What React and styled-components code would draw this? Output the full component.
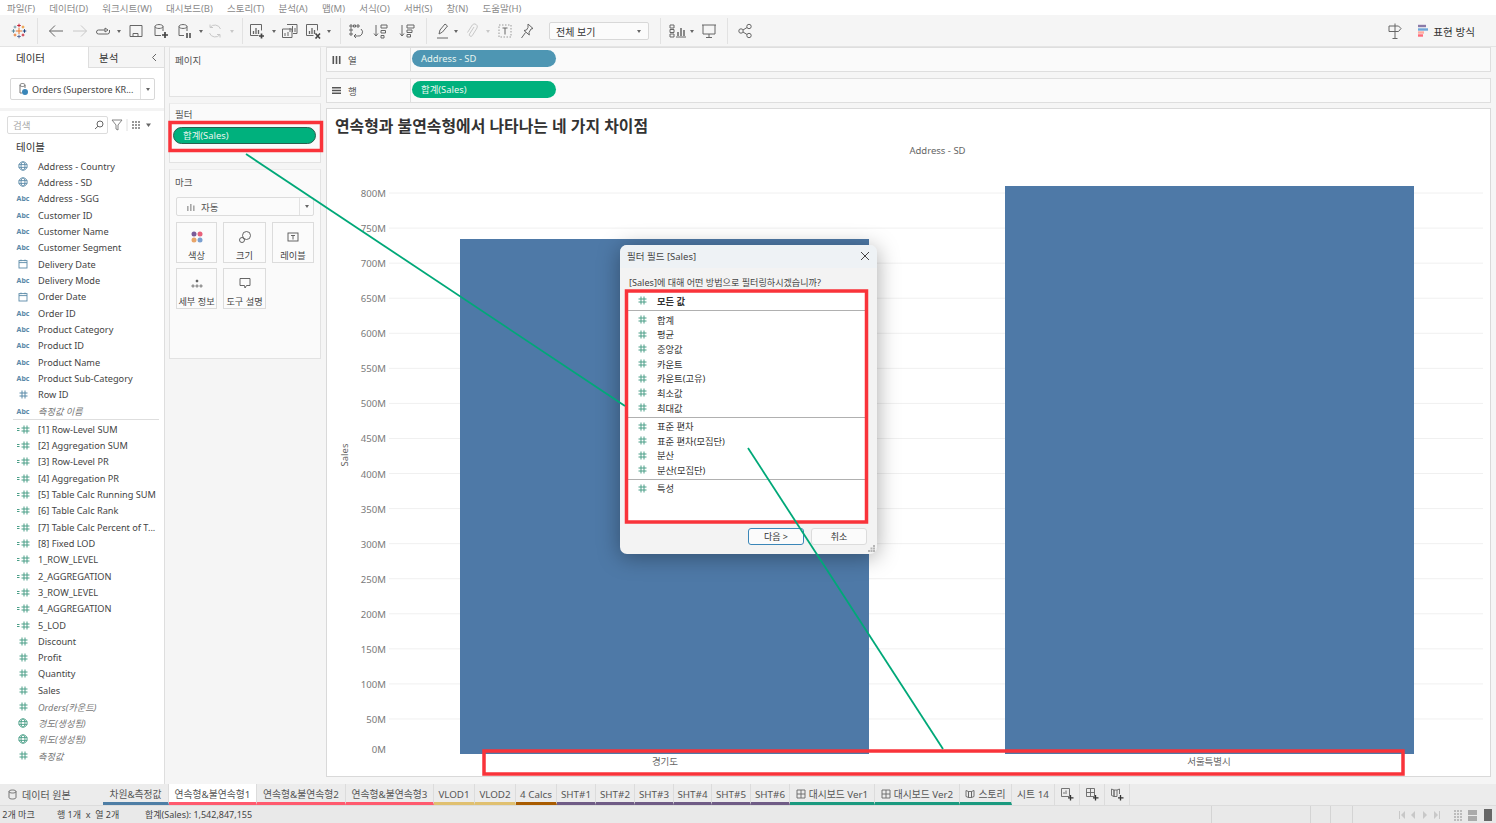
import React from 'react';
import styled, { createGlobalStyle } from 'styled-components';

const GlobalStyle = createGlobalStyle`
  html, body { margin: 0; padding: 0; background: #fff; }
  body { font-family: "Noto Sans", "Noto Sans CJK KR", sans-serif; font-size: 10px; color: #444; overflow: hidden; }
  * { box-sizing: border-box; }
`;

const Page = styled.div`
  position: relative;
  width: 1496px;
  height: 823px;
  display: grid;
  grid-template-rows: 15px 32px 737px 22px 17px;
  overflow: hidden;
`;

const MenuBar = styled.div`
  display: flex;
  align-items: center;
  gap: 14.2px;
  padding-left: 7px;
  background: #fff;
  color: #8a8a8a;
  font-size: 9.5px;
`;

const Toolbar = styled.div`
  display: flex;
  align-items: center;
  padding: 1px 21px 0 11px;
  background: #f5f5f5;
  border-bottom: 1px solid #e4e4e4;
`;

const Tool = styled.svg`
  flex: none;
  width: ${p => p.$w}px;
  height: 16px;
  margin-left: ${p => p.$ml}px;
  fill: none;
  stroke: ${p => p.$light ? '#c8c8c8' : '#666'};
  stroke-width: 1;
`;

const Caret = styled.span`
  flex: none;
  width: 0;
  height: 0;
  margin-left: ${p => p.$ml + 1}px;
  margin-right: 1px;
  border-left: 2px solid transparent;
  border-right: 2px solid transparent;
  border-top: 3px solid ${p => p.$light ? '#c8c8c8' : '#666'};
`;

const ToolSep = styled.span`
  flex: none;
  width: 1px;
  height: 26px;
  margin-left: ${p => p.$ml}px;
  background: #e2e2e2;
`;

const FitSelect = styled.div`
  flex: none;
  display: flex;
  align-items: center;
  justify-content: space-between;
  width: 100px;
  height: 18px;
  margin-left: 15px;
  padding: 0 7px 0 6px;
  background: #fbfbfb;
  border: 1px solid #d8d8d8;
  border-radius: 2px;
  color: #333;
  font-size: 10px;
`;

const Spacer = styled.div`
  flex: 1;
`;

const ShowLabel = styled.span`
  margin-left: 5px;
  color: #333;
  font-size: 10.6px;
`;

const Main = styled.div`
  display: grid;
  grid-template-columns: 165px 161px 1fr;
  min-height: 0;
  background: #f5f5f5;
`;

const LeftPanel = styled.aside`
  background: #fff;
  border-right: 1px solid #dedede;
  overflow: hidden;
`;

const PanelTabs = styled.div`
  display: flex;
  height: 21px;
`;

const PanelTab = styled.div`
  display: flex;
  align-items: center;
  justify-content: space-between;
  width: ${p => p.$w}px;
  padding: 0 7px 0 ${p => p.$pl}px;
  background: ${p => p.$active ? '#fff' : '#f5f5f5'};
  border-bottom: ${p => p.$active ? 'none' : '1px solid #dedede'};
  border-left: ${p => p.$active ? 'none' : '1px solid #dedede'};
  color: #333;
  font-size: 10.5px;
`;

const SourceBox = styled.div`
  display: flex;
  align-items: center;
  height: 22px;
  margin: 10px 9px 0 10px;
  background: #fff;
  border: 1px solid #d8d8d8;
  border-radius: 2px;
  color: #444;
  font-size: 9px;
`;

const SourceName = styled.span`
  flex: 1;
  margin-left: 1px;
  white-space: nowrap;
`;

const SourceCaret = styled.div`
  display: flex;
  align-items: center;
  justify-content: center;
  width: 14px;
  height: 100%;
  border-left: 1px solid #e2e2e2;
`;

const Band = styled.div`
  height: 3px;
  margin-top: 8px;
  background: #f3f3f3;
`;

const SearchRow = styled.div`
  display: flex;
  align-items: center;
  height: 18px;
  margin: 5px 0 0 7px;
`;

const SearchBox = styled.div`
  display: flex;
  align-items: center;
  justify-content: space-between;
  width: 101px;
  height: 18px;
  padding: 0 3px 0 5px;
  border: 1px solid #dcdcdc;
  border-radius: 2px;
  color: #aaa;
  font-size: 9.5px;
`;

const TableHead = styled.div`
  display: flex;
  align-items: center;
  height: 24px;
  padding: 1px 0 0 16px;
  color: #333;
  font-size: 10.5px;
`;

const FieldRow = styled.div`
  display: flex;
  align-items: center;
  gap: 6px;
  height: 16.33px;
  padding-left: 14px;
  color: ${p => p.$italic ? '#777' : '#444'};
  font-size: 9.2px;
  font-style: ${p => p.$italic ? 'italic' : 'normal'};
  white-space: nowrap;
`;

const FieldIconSlot = styled.span`
  display: flex;
  align-items: center;
  justify-content: center;
  flex: none;
  width: 18px;
`;

const AbcIcon = styled.span`
  color: #5b8aa8;
  font-size: 7px;
  font-weight: 700;
  font-style: normal;
`;

const FieldSep = styled.div`
  height: 1px;
  margin: 0 5px 0.66px 13px;
  background: #dedede;
`;

const ShelfColumn = styled.div`
  display: flex;
  flex-direction: column;
  padding: 0 5px 0 4px;
`;

const Card = styled.section`
  height: ${p => p.$h}px;
  margin-bottom: ${p => p.$mb}px;
  padding: 0 6px;
  background: #fafafa;
  border: 1px solid #e2e2e2;
  border-top-color: #ececec;
`;

const CardTitle = styled.div`
  display: flex;
  align-items: center;
  height: ${p => p.$h}px;
  margin-left: -1px;
  padding-bottom: ${p => p.$pb}px;
  color: #555;
  font-size: 9.5px;
`;

const Pill = styled.div`
  display: flex;
  align-items: center;
  width: ${p => p.$w}px;
  height: 17px;
  padding: 0 0 1px 9px;
  background: ${p => p.$color};
  border: ${p => p.$selected ? '1px solid #2a5f50' : 'none'};
  border-radius: 9px;
  color: #e8f5f0;
  font-size: 9.4px;
  white-space: nowrap;
`;

const FilterPill = styled(Pill)`
  margin-left: -3px;
`;

const MarkSelect = styled.div`
  display: flex;
  align-items: center;
  height: 19px;
  padding-left: 9px;
  background: #fbfbfb;
  border: 1px solid #dcdcdc;
  border-radius: 2px;
  color: #555;
  font-size: 9.5px;
`;

const MarkSelectLabel = styled.span`
  flex: 1;
  margin-left: 5px;
`;

const MarkGrid = styled.div`
  display: grid;
  grid-template-columns: 41px 43px 42px;
  grid-auto-rows: 41px;
  gap: 5px 6px;
  margin-top: 6px;
`;

const MarkButton = styled.div`
  display: flex;
  flex-direction: column;
  align-items: center;
  gap: 7px;
  padding-top: 8px;
  background: #fbfbfb;
  border: 1px solid #dcdcdc;
  color: #444;
  font-size: 9.2px;
  line-height: 12px;
  white-space: nowrap;
`;

const RightColumn = styled.div`
  display: flex;
  flex-direction: column;
  padding: 0 5px 7px 0;
`;

const Shelf = styled.div`
  display: flex;
  flex: none;
  height: ${p => p.$h}px;
  margin-bottom: ${p => p.$mb}px;
  background: #fafafa;
  border: 1px solid #dedede;
`;

const ShelfName = styled.div`
  display: flex;
  align-items: center;
  gap: 7px;
  width: 84px;
  padding-left: 5px;
  border-right: 1px solid #dedede;
  color: #555;
  font-size: 9.5px;
`;

const ShelfBody = styled.div`
  padding: 2px 0 0 1px;
`;

const Viz = styled.div`
  display: flex;
  flex: 1;
  flex-direction: column;
  min-height: 0;
  background: #fff;
  border: 1px solid #d9d9d9;
`;

const VizTitle = styled.h1`
  display: flex;
  align-items: center;
  flex: none;
  height: 33px;
  margin: 0 0 2px;
  padding-left: 8px;
  color: #333;
  font-size: 15.9px;
  font-weight: 700;
`;

const HeaderLabel = styled.div`
  flex: none;
  height: 14px;
  margin-left: 58px;
  color: #666;
  font-size: 9.5px;
  line-height: 14px;
  text-align: center;
`;

const ChartSvg = styled.svg`
  display: block;
  flex: none;
`;

const Tick = styled.text`
  fill: #7a7a7a;
  font-size: 9.6px;
  text-anchor: end;
`;

const AxisTitle = styled.text`
  fill: #666;
  font-size: 9.5px;
  text-anchor: middle;
`;

const CategoryLabel = styled.text`
  fill: #666;
  font-size: 9.5px;
  text-anchor: middle;
`;

const TabBar = styled.div`
  display: flex;
  background: #ececec;
  border-bottom: 1px solid #dcdcdc;
`;

const SourceTab = styled.div`
  display: flex;
  align-items: center;
  gap: 5px;
  width: 103px;
  padding-left: 8px;
  color: #555;
  font-size: 10px;
`;

const SheetTab = styled.div`
  display: flex;
  align-items: center;
  justify-content: center;
  gap: 3px;
  flex: none;
  width: ${p => p.$w}px;
  padding-top: ${p => p.$color ? 2 : 0}px;
  padding-bottom: ${p => p.$color ? 0 : 1}px;
  background: ${p => p.$active ? '#fff' : '#ececec'};
  border-right: 1px solid #dcdcdc;
  border-bottom: ${p => p.$color ? `3px solid ${p.$color}` : 'none'};
  color: #555;
  font-size: 9.8px;
  white-space: nowrap;
`;

const StatusBar = styled.div`
  display: flex;
  align-items: center;
  background: #e9e9e9;
  color: #444;
  font-size: 9px;
`;

const StatusText = styled.span`
  flex: none;
  width: ${p => p.$w}px;
  white-space: nowrap;
`;

const StatusCell = styled.div`
  flex: none;
  align-self: stretch;
  width: ${p => p.$w}px;
  border-left: 1px solid #d4d4d4;
`;

const StatusIcons = styled.div`
  display: flex;
  align-items: center;
  flex: none;
  align-self: stretch;
  width: 102px;
  padding-left: 45px;
  border-left: 1px solid #d4d4d4;
`;

const Dialog = styled.div`
  position: absolute;
  top: 245px;
  left: 620px;
  display: flex;
  flex-direction: column;
  width: 257px;
  height: 309px;
  background: #f3f3f3;
  border-radius: 7px;
  box-shadow: 0 3px 22px rgba(0, 0, 0, 0.35);
  overflow: hidden;
`;

const DialogTitle = styled.div`
  display: flex;
  align-items: center;
  justify-content: space-between;
  flex: none;
  height: 23px;
  padding: 0 7px 2px 7px;
  background: #eef2f5;
  color: #444;
  font-size: 9.5px;
`;

const DialogPrompt = styled.div`
  display: flex;
  align-items: flex-end;
  flex: none;
  height: 21px;
  padding-left: 9px;
  color: #444;
  font-size: 9.1px;
  white-space: nowrap;
`;

const OptionList = styled.div`
  flex: none;
  height: 230px;
  margin: 2px 11px 0 6px;
  background: #fff;
`;

const OptionGroup = styled.div`
  padding: ${p => p.$pt}px 0 2px;
  border-bottom: ${p => p.$last ? 'none' : '1px solid #b0b0b0'};
`;

const Option = styled.div`
  display: flex;
  align-items: center;
  gap: 10px;
  height: ${p => p.$rh}px;
  padding-left: 12px;
  color: #333;
  font-size: 9.3px;
  font-weight: ${p => p.$bold ? 700 : 400};
`;

const DialogButtons = styled.div`
  display: flex;
  justify-content: flex-end;
  gap: 7px;
  margin-top: 7px;
  padding-right: 10px;
`;

const DialogButton = styled.div`
  display: flex;
  align-items: center;
  justify-content: center;
  width: 56px;
  height: 17px;
  background: #fbfbfb;
  border: ${p => p.$primary ? '1.5px solid #3a86b8' : '1px solid #dcdcdc'};
  border-radius: 3px;
  color: #333;
  font-size: 9px;
`;

const Grip = styled.svg`
  position: absolute;
  right: 2px;
  bottom: 2px;
  width: 7px;
  height: 7px;
  fill: #b5b5b5;
`;

const Annotations = styled.svg`
  position: absolute;
  top: 0;
  left: 0;
  width: 1496px;
  height: 823px;
  pointer-events: none;
`;

const RedBox = styled.rect`
  fill: none;
  stroke: #f9333a;
  stroke-width: 3.5;
`;

const GreenLine = styled.line`
  stroke: #00a878;
  stroke-width: 1.8;
`;

const SmallCaret = styled.span`
  width: 0;
  height: 0;
  border-left: 2.5px solid transparent;
  border-right: 2.5px solid transparent;
  border-top: 3.5px solid #666;
`;

const MENUS = ['파일(F)', '데이터(D)', '워크시트(W)', '대시보드(B)', '스토리(T)', '분석(A)', '맵(M)', '서식(O)', '서버(S)', '창(N)', '도움말(H)'];

const DIMENSIONS = [
  ['globe', 'Address - Country'], ['globe', 'Address - SD'], ['abc', 'Address - SGG'], ['abc', 'Customer ID'],
  ['abc', 'Customer Name'], ['abc', 'Customer Segment'], ['date', 'Delivery Date'], ['abc', 'Delivery Mode'],
  ['date', 'Order Date'], ['abc', 'Order ID'], ['abc', 'Product Category'], ['abc', 'Product ID'],
  ['abc', 'Product Name'], ['abc', 'Product Sub-Category'], ['hashBlue', 'Row ID'], ['abc', '측정값 이름', true],
];

const MEASURES = [
  ['calc', '[1] Row-Level SUM'], ['calc', '[2] Aggregation SUM'], ['calc', '[3] Row-Level PR'], ['calc', '[4] Aggregation PR'],
  ['calc', '[5] Table Calc Running SUM'], ['calc', '[6] Table Calc Rank'], ['calc', '[7] Table Calc Percent of T...'], ['calc', '[8] Fixed LOD'],
  ['calc', '1_ROW_LEVEL'], ['calc', '2_AGGREGATION'], ['calc', '3_ROW_LEVEL'], ['calc', '4_AGGREGATION'], ['calc', '5_LOD'],
  ['hash', 'Discount'], ['hash', 'Profit'], ['hash', 'Quantity'], ['hash', 'Sales'],
  ['hash', 'Orders(카운트)', true], ['globeGreen', '경도(생성됨)', true], ['globeGreen', '위도(생성됨)', true], ['hash', '측정값', true],
];

const OPTION_GROUPS = [
  { pt: 2.5, rh: 14.7, items: ['모든 값'], bold: true },
  { pt: 1, rh: 14.7, items: ['합계', '평균', '중앙값', '카운트', '카운트(고유)', '최소값', '최대값'] },
  { pt: 1, rh: 14.5, items: ['표준 편차', '표준 편차(모집단)', '분산', '분산(모집단)'] },
  { pt: 1, rh: 14.5, items: ['특성'], last: true },
];

const PINK = '#ff5a6e';
const TAN = '#e0c070';
const PURPLE = '#6f5b85';
const TEAL = '#1a9a7f';

const SHEETS = [
  { name: '차원&측정값', w: 66, color: '#4e7ea5' },
  { name: '연속형&불연속형1', w: 88, color: PINK, active: true },
  { name: '연속형&불연속형2', w: 89, color: PINK },
  { name: '연속형&불연속형3', w: 88, color: PINK },
  { name: 'VLOD1', w: 41, color: TAN },
  { name: 'VLOD2', w: 41, color: TAN },
  { name: '4 Calcs', w: 41, color: '#a85b00' },
  { name: 'SHT#1', w: 39, color: PURPLE },
  { name: 'SHT#2', w: 39, color: PURPLE },
  { name: 'SHT#3', w: 39, color: PURPLE },
  { name: 'SHT#4', w: 38, color: PURPLE },
  { name: 'SHT#5', w: 39, color: PURPLE },
  { name: 'SHT#6', w: 39, color: PURPLE },
  { name: '대시보드 Ver1', w: 85, color: TEAL, icon: 'dash' },
  { name: '대시보드 Ver2', w: 85, color: TEAL, icon: 'dash' },
  { name: '스토리', w: 52, color: TEAL, icon: 'story' },
  { name: '시트 14', w: 43 },
];

const TICKS = Array.from({ length: 17 }, (_, i) => i * 50);

function HashIcon({ color = '#4a9e87' }) {
  return (
    <svg width="9" height="9" viewBox="0 0 9 9" fill="none" stroke={color} strokeWidth="1">
      <path d="M3 .5v8M6 .5v8M.5 3h8M.5 6h8" />
    </svg>
  );
}

function CalcIcon() {
  return (
    <svg width="13" height="9" viewBox="0 0 13 9" fill="none" stroke="#4a9e87" strokeWidth="1">
      <path d="M0 3.5h2.5M0 5.5h2.5M7 .5v8M10 .5v8M4.5 3h8M4.5 6h8" />
    </svg>
  );
}

function GlobeIcon({ color = '#5b8aa8' }) {
  return (
    <svg width="10" height="10" viewBox="0 0 10 10" fill="none" stroke={color} strokeWidth="0.9">
      <circle cx="5" cy="5" r="4.2" />
      <ellipse cx="5" cy="5" rx="2" ry="4.2" />
      <path d="M.8 3.6h8.4M.8 6.4h8.4" />
    </svg>
  );
}

function DateIcon() {
  return (
    <svg width="10" height="10" viewBox="0 0 10 10" fill="none" stroke="#5b8aa8" strokeWidth="0.9">
      <rect x="1" y="1.6" width="8" height="7.4" />
      <path d="M1 3.6h8M3 .6v1.6M7 .6v1.6" />
    </svg>
  );
}

function FieldIcon({ type }) {
  if (type === 'abc') return <AbcIcon>Abc</AbcIcon>;
  if (type === 'globe') return <GlobeIcon />;
  if (type === 'globeGreen') return <GlobeIcon color="#4a9e87" />;
  if (type === 'date') return <DateIcon />;
  if (type === 'hashBlue') return <HashIcon color="#5b8aa8" />;
  if (type === 'calc') return <CalcIcon />;
  return <HashIcon />;
}

function Field({ type, name, italic }) {
  return (
    <FieldRow $italic={italic}>
      <FieldIconSlot><FieldIcon type={type} /></FieldIconSlot>
      {name}
    </FieldRow>
  );
}

function TableauLogo() {
  const marks = [
    [8, 8, 3, '#e8762c'], [8, 2.5, 1.8, '#c72035'], [8, 13.5, 1.8, '#5b6f9e'],
    [2.5, 8, 1.8, '#59879b'], [13.5, 8, 1.8, '#1f447e'],
    [4, 4, 1.4, '#7099a6'], [12, 4, 1.4, '#eb912b'], [4, 12, 1.4, '#e8762c'], [12, 12, 1.4, '#c72035'],
  ];
  return (
    <Tool $w={16} $ml={0} viewBox="0 0 16 16">
      {marks.map(([x, y, r, c], i) => (
        <path key={i} d={`M${x - r} ${y}h${r * 2}M${x} ${y - r}v${r * 2}`} stroke={c} />
      ))}
    </Tool>
  );
}

const bars = 'M4.5 11V8M7 11V5M9.5 11V7';
const plus = 'M12.5 10.5v5M10 13h5';

function Toolset() {
  return (
    <>
      <TableauLogo />
      <ToolSep $ml={10} />
      <Tool $w={16} $ml={10} viewBox="0 0 16 16"><path d="M15 8H1.5M7 2.5L1.5 8 7 13.5" /></Tool>
      <Tool $w={16} $ml={8} $light viewBox="0 0 16 16"><path d="M1 8h13.5M9 2.5L14.5 8 9 13.5" /></Tool>
      <Tool $w={18} $ml={6} viewBox="0 0 18 16"><path d="M11 7H4.500a2 2 0 0 0 0 4h9a2 2 0 0 0 2-2V7M11 5V9L14 7z" /></Tool>
      <Caret $ml={4} />
      <Tool $w={14} $ml={7} viewBox="0 0 14 16"><path d="M1 2.500h12v11H1zM4 13.500v-3h5v3" /></Tool>
      <Tool $w={16} $ml={10} viewBox="0 0 16 16"><path d="M2 3.500c0-2.600 8-2.600 8 0s-8 2.600-8 0v9h6M10 3.500V8" /><path d="M12 9v6M9 12h6" strokeWidth="1.700" stroke="#444" /></Tool>
      <Tool $w={16} $ml={8} viewBox="0 0 16 16"><path d="M2 3.500c0-2.600 8-2.600 8 0s-8 2.600-8 0v9h5M10 3.500V8" /><path d="M10 10v5M13 10v5" strokeWidth="1.500" stroke="#444" /></Tool>
      <Caret $ml={5} />
      <Tool $w={16} $ml={3} $light viewBox="0 0 16 16"><path d="M13.500 6A6 6 0 0 0 3 4.500M2.500 10A6 6 0 0 0 13 11.500M3 1.500v3h3M13 14.500v-3h-3" /></Tool>
      <Caret $ml={6} $light />
      <ToolSep $ml={7} />
      <Tool $w={18} $ml={6} viewBox="0 0 18 16"><path d="M1.500 1.500v11h8M1.500 1.500h11v6" /><path d={bars} strokeWidth="1.300" /><path d={plus} strokeWidth="1.700" stroke="#444" /></Tool>
      <Caret $ml={4} />
      <Tool $w={18} $ml={4} viewBox="0 0 18 16"><path d="M6 1.500h10v9H12M1.500 6H11v8.500H1.500z" /><path d="M9 9V5M11.500 9V3M14 9V5M4 13v-3M7 13v-4" /></Tool>
      <Tool $w={18} $ml={6} viewBox="0 0 18 16"><path d="M1.500 1.500v11h7M1.500 1.500h11v6" /><path d={bars} strokeWidth="1.300" /><path d="M10.500 10.500l4.500 5M15 10.500l-4.500 5" strokeWidth="1.600" stroke="#444" /></Tool>
      <Caret $ml={3} />
      <ToolSep $ml={8} />
      <Tool $w={16} $ml={7} viewBox="0 0 16 16"><path d="M2 2h2v2H2zM5.500 2h2v2h-2zM9 2h2v2H9zM2 6h2v2H2zM2 10h2v2H2zM13 6a4 4 0 0 1-3.500 7H6M8 11l-2 2 2 2" /></Tool>
      <Tool $w={16} $ml={9} viewBox="0 0 16 16"><path d="M3 2v11M1 10.500L3 13l2-2.500M8 2h6v3H8zM8 7.500h4.500v2.500H8zM8 12.500h3V15H8z" /></Tool>
      <Tool $w={16} $ml={10} viewBox="0 0 16 16"><path d="M3 2v11M1 10.500L3 13l2-2.500M8 2h7v3H8zM8 7h5v2.500H8zM8 11.500h3.500V14H8z" /></Tool>
      <ToolSep $ml={11} />
      <Tool $w={14} $ml={9} viewBox="0 0 14 16"><path d="M3 11l1-4 5-6 2.500 2-5 6zM1 15h11" /></Tool>
      <Caret $ml={3} />
      <Tool $w={12} $ml={7} $light viewBox="0 0 12 16"><path d="M8 4l-4.500 7a1.600 1.600 0 0 0 2.700 1.700L11 5a2.800 2.800 0 0 0-4.700-3L1.500 9.500" /></Tool>
      <Caret $ml={7} $light />
      <Tool $w={14} $ml={7} viewBox="0 0 14 16"><path d="M1 2h12v12H1z" strokeDasharray="1.500 1.500" stroke="#999" /><path d="M4.500 5h5M7 5v6.500" /></Tool>
      <Tool $w={14} $ml={8} viewBox="0 0 14 16"><path d="M8 1l5 4.500-2 .5-2 3.500.3 2.500L4 7.500l2.500-.5L8 4.500zM5.500 9.500L1.500 15" /></Tool>
      <FitSelect>전체 보기<SmallCaret /></FitSelect>
      <ToolSep $ml={11} />
      <Tool $w={18} $ml={8} viewBox="0 0 18 16"><path d="M1 2h4v3H1zM1 6.500h4v3H1zM1 11h4v3H1zM7 14h10" /><path d="M9 13V9M12 13V5M15 13V7" strokeWidth="1.500" /></Tool>
      <Caret $ml={2} />
      <Tool $w={16} $ml={6} viewBox="0 0 16 16"><path d="M1 2h14M2 2v9h12V2M8 11v3.500M5 14.500h6" /></Tool>
      <ToolSep $ml={10} />
      <Tool $w={14} $ml={10} viewBox="0 0 14 16"><circle cx="3" cy="8" r="2.200" /><circle cx="11" cy="3.500" r="2.200" /><circle cx="11" cy="12.500" r="2.200" /><path d="M5 7l4-2.500M5 9l4 2.500" /></Tool>
      <Spacer />
      <Tool $w={14} $ml={0} viewBox="0 0 14 16"><path d="M7 .5v15M4.500 15.500h5M1 3h9.500L13 5.500 10.500 8.500H1z" /></Tool>
      <Tool $w={10} $ml={16} viewBox="0 0 10 16">
        <path d="M0 3h8" stroke="#8a7aa8" strokeWidth="2.400" />
        <path d="M0 6.500h10" stroke="#6ea6d8" strokeWidth="2.400" />
        <path d="M0 9.500h6" stroke="#ffaaa0" strokeWidth="2.400" />
        <path d="M0 12.500h5" stroke="#ff6b7a" strokeWidth="2.400" />
      </Tool>
      <ShowLabel>표현 방식</ShowLabel>
    </>
  );
}

function MarkCard() {
  return (
    <Card $h={190} $mb={0}>
      <CardTitle $h={27} $pb={4}>마크</CardTitle>
      <MarkSelect>
        <svg width="10" height="9" viewBox="0 0 10 9" fill="#a8a8a8"><path d="M1 4h1.600v5H1zM4 2h1.600v7H4zM7 3.500h1.600V9H7z" /></svg>
        <MarkSelectLabel>자동</MarkSelectLabel>
        <SourceCaret><SmallCaret /></SourceCaret>
      </MarkSelect>
      <MarkGrid>
        <MarkButton>
          <svg width="12" height="12" viewBox="0 0 12 12">
            <circle cx="3" cy="3" r="2.500" fill="#7a5c99" />
            <circle cx="9" cy="3" r="2.500" fill="#e8617a" />
            <circle cx="3" cy="9" r="2.500" fill="#e8a56a" />
            <circle cx="9" cy="9" r="2.500" fill="#7a9fd0" />
          </svg>
          색상
        </MarkButton>
        <MarkButton>
          <svg width="12" height="12" viewBox="0 0 12 12" fill="none" stroke="#555" strokeWidth="0.9">
            <circle cx="7.500" cy="4.500" r="4" />
            <circle cx="3" cy="9" r="2.500" />
          </svg>
          크기
        </MarkButton>
        <MarkButton>
          <svg width="12" height="12" viewBox="0 0 12 12" fill="none" stroke="#555" strokeWidth="0.9">
            <rect x="1" y="2" width="10" height="8" />
            <path d="M4 4.500h4M6 4.500v4" />
          </svg>
          레이블
        </MarkButton>
        <MarkButton>
          <svg width="12" height="12" viewBox="0 0 12 12" fill="none" stroke="#555" strokeWidth="0.8">
            <circle cx="6" cy="4" r="1" fill="#555" />
            <circle cx="2" cy="9" r="1.100" />
            <circle cx="6" cy="9" r="1.100" />
            <circle cx="10" cy="9" r="1.100" />
          </svg>
          세부 정보
        </MarkButton>
        <MarkButton>
          <svg width="12" height="12" viewBox="0 0 12 12" fill="none" stroke="#555" strokeWidth="0.9">
            <path d="M1 1.500h10v7H7.500L6 11 5.500 8.500H1z" />
          </svg>
          도구 설명
        </MarkButton>
      </MarkGrid>
    </Card>
  );
}

function Chart() {
  const y = v => 754 - v * 0.7012;
  return (
    <ChartSvg width="1163" height="618" viewBox="327 158 1163 618">
      {TICKS.map(v => (
        <g key={v}>
          {v > 0 && <line x1="389" x2="1483" y1={y(v)} y2={y(v)} stroke="#f0f0f0" />}
          <Tick x="386" y={v === 0 ? 753 : y(v) + 4}>{v}M</Tick>
        </g>
      ))}
      <AxisTitle transform="translate(348 455) rotate(-90)">Sales</AxisTitle>
      <rect x="460" y="239" width="409" height="515" fill="#4e79a7" />
      <rect x="1005" y="186" width="409" height="568" fill="#4e79a7" />
      <CategoryLabel x="665" y="765">경기도</CategoryLabel>
      <CategoryLabel x="1209" y="765">서울특별시</CategoryLabel>
    </ChartSvg>
  );
}

function FilterDialog() {
  return (
    <Dialog>
      <DialogTitle>
        필터 필드 [Sales]
        <svg width="10" height="10" viewBox="0 0 10 10" fill="none" stroke="#444" strokeWidth="1">
          <path d="M1 1l8 8M9 1l-8 8" />
        </svg>
      </DialogTitle>
      <DialogPrompt>[Sales]에 대해 어떤 방법으로 필터링하시겠습니까?</DialogPrompt>
      <OptionList>
        {OPTION_GROUPS.map(group => (
          <OptionGroup key={group.items[0]} $pt={group.pt} $last={group.last}>
            {group.items.map(item => (
              <Option key={item} $bold={group.bold} $rh={group.rh}>
                <HashIcon />
                {item}
              </Option>
            ))}
          </OptionGroup>
        ))}
      </OptionList>
      <DialogButtons>
        <DialogButton $primary>다음 &gt;</DialogButton>
        <DialogButton>취소</DialogButton>
      </DialogButtons>
      <Grip viewBox="0 0 7 7">
        <path d="M5 0h2v2H5zM2.500 2.500h2v2h-2zM5 2.500h2v2H5zM0 5h2v2H0zM2.500 5h2v2h-2zM5 5h2v2H5z" />
      </Grip>
    </Dialog>
  );
}

function TabIcon({ kind }) {
  if (kind === 'story') {
    return (
      <svg width="10" height="10" viewBox="0 0 10 10" fill="none" stroke="#666" strokeWidth="0.9">
        <path d="M1 1.500l2.500 1v6L1 7.500zM3.500 2.500h3v6h-3zM6.500 2.500L9 1.500v6l-2.500 1z" />
      </svg>
    );
  }
  return (
    <svg width="10" height="10" viewBox="0 0 10 10" fill="none" stroke="#666" strokeWidth="0.9">
      <path d="M1 1h8v8H1zM1 5h8M5 1v8" />
    </svg>
  );
}

function NewTabIcon({ kind }) {
  return (
    <svg width="14" height="14" viewBox="0 0 14 14" fill="none" stroke="#666" strokeWidth="0.9">
      {kind === 'sheet' && <path d="M1.500 1.500h8v8h-8zM4 7V5M6 7V3.500" />}
      {kind === 'dash' && <path d="M1.500 1.500h8v8h-8zM1.500 5.500h8M5.500 1.500v8" />}
      {kind === 'story' && <path d="M1.500 2l2.500 1v6.500l-2.500-1zM4 3h3v6.500H4zM7 3l2.500-1v5" />}
      <path d="M10.500 8v5.500M8 10.800h5.500" stroke="#333" strokeWidth="1.300" />
    </svg>
  );
}

function StatusNav() {
  return (
    <svg width="44" height="10" viewBox="0 0 44 10" fill="#c8c8c8">
      <path d="M1 1h1v8H1zM7 1v8L3 5zM17 1v8l-4-4zM25 1v8l4-4zM36 1v8l4-4zM41 1h1v8h-1z" />
    </svg>
  );
}

function StatusViews() {
  return (
    <svg width="38" height="14" viewBox="0 0 38 14" fill="#bcbcbc">
      <path d="M0 2h2v2H0zM3 2h2v2H3zM6 2h2v2H6zM0 5h2v2H0zM3 5h2v2H3zM6 5h2v2H6zM0 8h2v2H0zM3 8h2v2H3zM6 8h2v2H6zM0 11h2v2H0zM3 11h2v2H3zM6 11h2v2H6z" />
      <path d="M14 2h9v5h-9zM14 8h9v5h-9z" fill="#aaa" />
      <path d="M30 1h8v12h-8z" fill="#666" />
    </svg>
  );
}

export default function App() {
  return (
    <Page>
      <GlobalStyle />
      <MenuBar>
        {MENUS.map(m => <span key={m}>{m}</span>)}
      </MenuBar>
      <Toolbar>
        <Toolset />
      </Toolbar>
      <Main>
        <LeftPanel>
          <PanelTabs>
            <PanelTab $w={88} $pl={16} $active>데이터</PanelTab>
            <PanelTab $w={76} $pl={10}>
              분석
              <svg width="6" height="9" viewBox="0 0 6 9" fill="none" stroke="#666"><path d="M5 1L1.500 4.500 5 8" /></svg>
            </PanelTab>
          </PanelTabs>
          <SourceBox>
            <svg width="20" height="14" viewBox="0 0 20 14" fill="none" stroke="#666" strokeWidth="0.9">
              <path d="M9 3c0-2 5-2 5 0s-5 2-5 0v8h2M14 3v3" />
              <circle cx="14" cy="10" r="3" fill="#3a86b8" stroke="none" />
            </svg>
            <SourceName>Orders (Superstore KR...</SourceName>
            <SourceCaret><SmallCaret /></SourceCaret>
          </SourceBox>
          <Band />
          <SearchRow>
            <SearchBox>
              검색
              <svg width="10" height="10" viewBox="0 0 10 10" fill="none" stroke="#666"><circle cx="6" cy="4" r="3" /><path d="M4 6.200L1 9" /></svg>
            </SearchBox>
            <svg width="44" height="12" viewBox="0 0 44 12" fill="none" stroke="#777" strokeWidth="0.9">
              <path d="M4 1h10L10 6v5L8 10V6z" />
              <path d="M19 0v12" stroke="#ddd" />
              <path d="M24 3h2M27 3h2M30 3h2M24 6h2M27 6h2M30 6h2M24 9h2M27 9h2M30 9h2" strokeWidth="1.400" />
              <path d="M38 4.500h5L40.500 8z" fill="#666" stroke="none" />
            </svg>
          </SearchRow>
          <TableHead>테이블</TableHead>
          {DIMENSIONS.map(([type, name, italic]) => <Field key={name} type={type} name={name} italic={italic} />)}
          <FieldSep />
          {MEASURES.map(([type, name, italic]) => <Field key={name} type={type} name={name} italic={italic} />)}
        </LeftPanel>
        <ShelfColumn>
          <Card $h={50} $mb={6}>
            <CardTitle $h={24} $pb={0}>페이지</CardTitle>
          </Card>
          <Card $h={60} $mb={6}>
            <CardTitle $h={23} $pb={4}>필터</CardTitle>
            <FilterPill $w={143} $color="#00b17d" $selected>합계(Sales)</FilterPill>
          </Card>
          <MarkCard />
        </ShelfColumn>
        <RightColumn>
          <Shelf $h={25} $mb={6}>
            <ShelfName>
              <svg width="9" height="9" viewBox="0 0 9 9" fill="#555"><path d="M.5 1h1.600v8H.5zM3.700 1h1.600v8H3.700zM6.900 1h1.600v8H6.900z" /></svg>
              열
            </ShelfName>
            <ShelfBody><Pill $w={144} $color="#4e96b3">Address - SD</Pill></ShelfBody>
          </Shelf>
          <Shelf $h={25} $mb={5}>
            <ShelfName>
              <svg width="9" height="9" viewBox="0 0 9 9" fill="#555"><path d="M0 1h9v1.400H0zM0 3.800h9v1.400H0zM0 6.600h9V8H0z" /></svg>
              행
            </ShelfName>
            <ShelfBody><Pill $w={144} $color="#00b17d">합계(Sales)</Pill></ShelfBody>
          </Shelf>
          <Viz>
            <VizTitle>연속형과 불연속형에서 나타나는 네 가지 차이점</VizTitle>
            <HeaderLabel>Address - SD</HeaderLabel>
            <Chart />
          </Viz>
        </RightColumn>
      </Main>
      <TabBar>
        <SourceTab>
          <svg width="9" height="11" viewBox="0 0 9 11" fill="none" stroke="#666" strokeWidth="0.9">
            <path d="M1 2.500c0-2 7-2 7 0v6c0 2-7 2-7 0zM1 2.500c0 2 7 2 7 0" />
          </svg>
          데이터 원본
        </SourceTab>
        {SHEETS.map(s => (
          <SheetTab key={s.name} $w={s.w} $color={s.color} $active={s.active}>
            {s.icon && <TabIcon kind={s.icon} />}
            {s.name}
          </SheetTab>
        ))}
        <SheetTab $w={25}><NewTabIcon kind="sheet" /></SheetTab>
        <SheetTab $w={25}><NewTabIcon kind="dash" /></SheetTab>
        <SheetTab $w={25}><NewTabIcon kind="story" /></SheetTab>
      </TabBar>
      <StatusBar>
        <StatusText $w={57}>&nbsp;2개 마크</StatusText>
        <StatusText $w={88}>행 1개 &nbsp;x&nbsp; 열 2개</StatusText>
        <StatusText $w={1066}>합계(Sales): 1,542,847,155</StatusText>
        <StatusCell $w={99} />
        <StatusCell $w={20} />
        <StatusCell $w={22} />
        <StatusIcons>
          <StatusNav />
        </StatusIcons>
        <StatusViews />
      </StatusBar>
      <FilterDialog />
      <Annotations viewBox="0 0 1496 823">
        <RedBox x="170" y="122.500" width="151.500" height="28" />
        <RedBox x="626.500" y="291" width="240" height="231" />
        <RedBox x="484" y="751" width="919" height="23" />
        <GreenLine x1="246" y1="154" x2="625" y2="406" />
        <GreenLine x1="748" y1="448" x2="943" y2="749" />
      </Annotations>
    </Page>
  );
}
